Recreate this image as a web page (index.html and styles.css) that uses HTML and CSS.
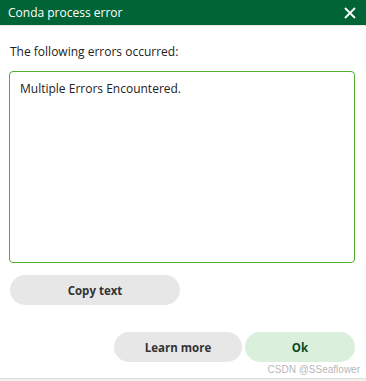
FILE: index.html
```html
<!DOCTYPE html>
<html lang="en-us">
  <head>
    <meta charset="utf-8" />
    <title>Conda process error</title>
    <link rel="stylesheet" href="styles.css">
  </head>
  <body>
    <div class="dialog">
      <div class="titlebar">
        <span class="title">Conda process error</span>
        <svg class="close" width="12" height="12" viewBox="0 0 12 12">
          <path d="M1 1 L11 11 M11 1 L1 11" stroke="#fff" stroke-width="1.8" />
        </svg>
      </div>

      <div class="content">
        <p class="label">The following errors occurred:</p>
        <div class="errorBox">Multiple Errors Encountered.</div>

        <div class="copyRow">
          <button class="btn copyBtn">Copy text</button>
        </div>

        <div class="actions">
          <button class="btn learnBtn">Learn more</button>
          <button class="btn okBtn">Ok</button>
        </div>
        <div class="watermark">CSDN @SSeaflower</div>
      </div>
      <div class="bottomLine"></div>
    </div>
  </body>
</html>
```

FILE: styles.css
```css
html {
  font-family: "Open Sans", "Noto Sans", sans-serif;
}

body {
  margin: 0;
  background: #fff;
}

.dialog {
  width: 366px;
  height: 381px;
  display: flex;
  flex-direction: column;
}

.titlebar {
  height: 25px;
  background-color: #006437;
  border-bottom: 1px solid #e6e6e6;
  display: flex;
  align-items: center;
  justify-content: space-between;
  padding: 0 10px 0 8px;
}

.title {
  color: #fff;
  font-size: 12px;
}

.content {
  flex: 1;
  padding: 0 11px 0 9px;
  display: flex;
  flex-direction: column;
}

.label {
  margin: 17px 0 0 1px;
  font-size: 12px;
  color: #222;
  line-height: 17px;
}

.errorBox {
  box-sizing: border-box;
  margin-top: 11px;
  height: 192px;
  border: 1px solid #52ad31;
  border-radius: 4px;
  padding: 8px 10px;
  font-size: 12px;
  color: #222;
}

.copyRow {
  margin-top: 12px;
}

.btn {
  border: none;
  border-radius: 16px;
  height: 30px;
  font-family: "Open Sans", sans-serif;
  font-weight: 700;
  font-size: 11.5px;
  color: #333;
  background-color: #e7e7e7;
}

.copyBtn {
  width: 170px;
  margin-left: 1px;
}

.actions {
  margin-top: 27px;
  display: flex;
  justify-content: flex-end;
  gap: 3px;
}

.learnBtn {
  width: 128px;
}

.okBtn {
  width: 110px;
  background-color: #daf0dd;
  color: #0b4a24;
}

.watermark {
  text-align: right;
  font-family: "Liberation Sans", sans-serif;
  font-size: 10px;
  color: #b8b8b8;
  margin-top: 2px;
  margin-right: -5px;
}

.bottomLine {
  height: 2px;
  border-top: 1px solid #ddd;
  background: #f2f2f2;
}
```
